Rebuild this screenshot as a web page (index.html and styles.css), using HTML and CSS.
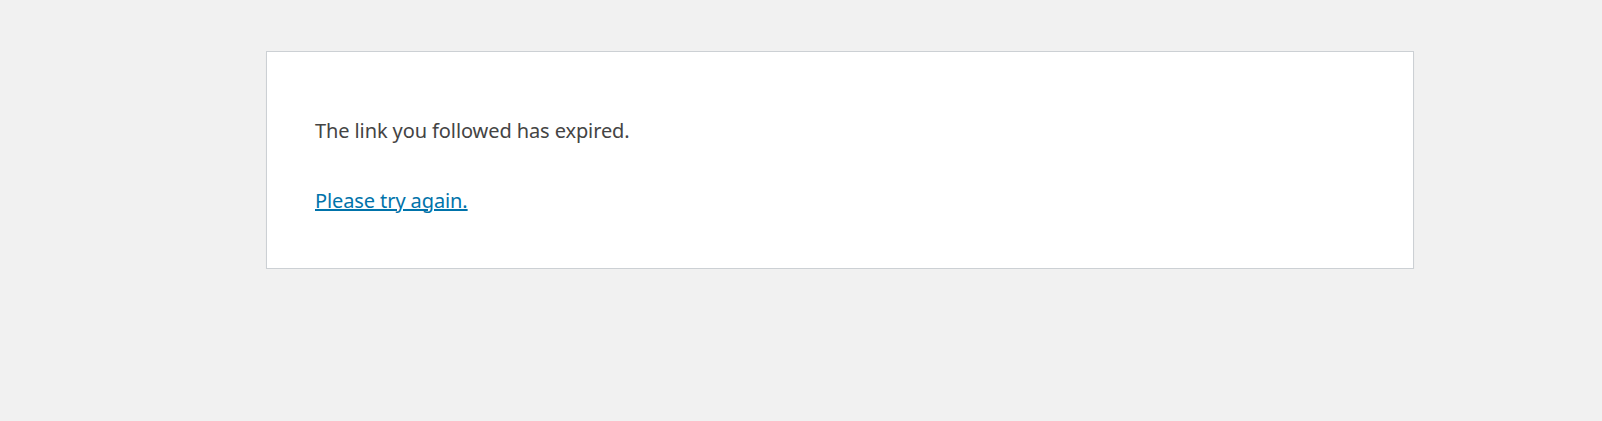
FILE: index.html
```html
<!DOCTYPE html>
<html lang="en">
<head>
<meta charset="utf-8">
<title>Something went wrong</title>
<link rel="stylesheet" href="styles.css">
</head>
<body class="page">
<div class="error-card">
<div class="message">
<p class="msg">The link you followed has expired.</p>
<p class="msg"><a class="retry" href="#">Please try again.</a></p>
</div>
</div>
</body>
</html>
```

FILE: styles.css
```css
html {
  background: #f1f1f1;
}
.page {
  margin: 0;
  padding: 51px 0 0 266px;
  font-family: "Noto Sans", "Open Sans", sans-serif;
  color: #444;
}
.error-card {
  box-sizing: border-box;
  width: 1148px;
  background: #fff;
  border: 1px solid #ccd0d4;
  box-shadow: 0 1.5px 1.5px rgba(0, 0, 0, 0.04);
  padding: 24px 48px;
}
.msg {
  font-size: 20px;
  letter-spacing: -0.1px;
  line-height: 31.5px;
  margin: 38.5px 0 28px;
}
.retry {
  color: #0073aa;
}
```
